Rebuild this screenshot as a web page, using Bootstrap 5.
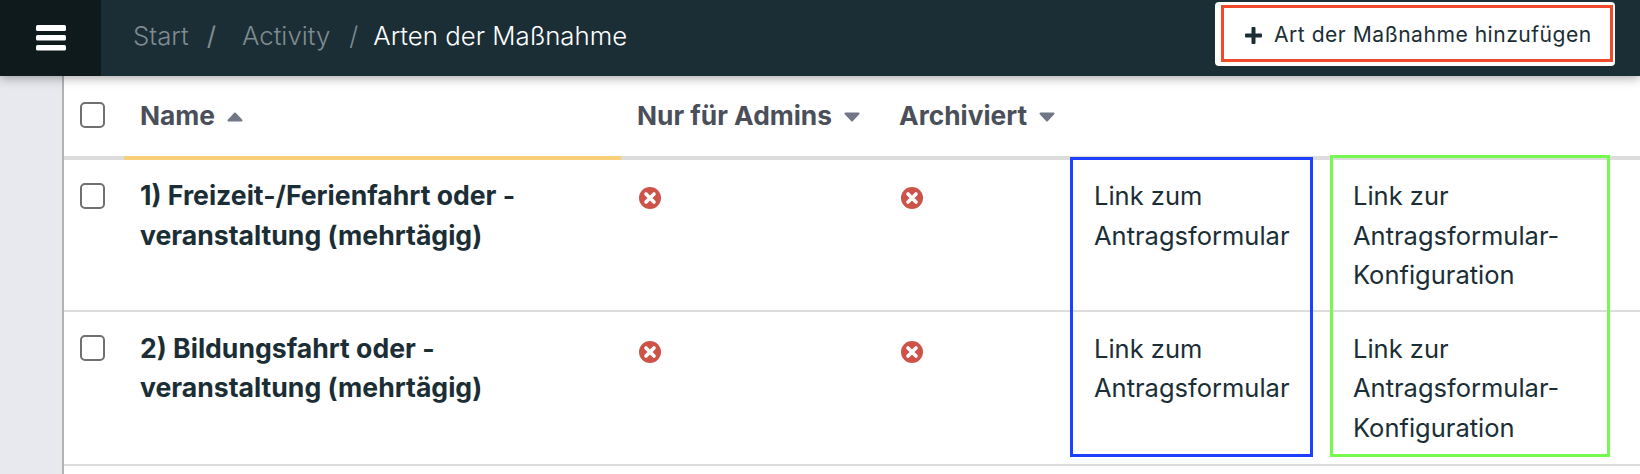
<!DOCTYPE html>
<html lang="de">
<head>
  <meta charset="UTF-8" />
  <meta name="viewport" content="width=device-width, initial-scale=1.0"/>
  <title>Arten der Maßnahme</title>
  <link href="https://cdn.jsdelivr.net/npm/bootstrap@5.3.3/dist/css/bootstrap.min.css" rel="stylesheet">
  <style>
    html, body { height: 100%; }
    body {
      overflow: hidden;
      background: #e7e9ee;
      font-family: "Inter", "Liberation Sans", sans-serif;
      color: #1b2e36;
    }

    .top-bar {
      height: 76px;
      padding: 0;
      background: #1b2e36;
      box-shadow: 0 2px 10px rgba(0, 0, 0, 0.35);
      position: relative;
      z-index: 2;
      align-items: flex-start;
    }
    .menu-toggle {
      --bs-btn-bg: #0e1a1c;
      --bs-btn-hover-bg: #0e1a1c;
      --bs-btn-active-bg: #0e1a1c;
      width: 101px;
      height: 76px;
      border: 0;
      border-radius: 0;
      padding: 0;
    }
    .top-bar .breadcrumb { font-size: 25.8px; margin-left: 32px; padding-bottom: 3px; }
    .top-bar .breadcrumb-item a { color: #7f8b90; text-decoration: none; font-weight: 300; }
    .top-bar .breadcrumb-item.active { color: #fff; font-weight: 300; }
    .top-bar .breadcrumb-item + .breadcrumb-item { padding-left: 18px; }
    .top-bar .breadcrumb-item + .breadcrumb-item::before { color: #7f8b90; padding-right: 18px; }
    .top-bar .breadcrumb-item:nth-child(2)::before { padding-right: 26px; }
    .top-bar .breadcrumb-item:nth-child(3)::before { padding-right: 15px; }
    .top-bar .breadcrumb-item:nth-child(3) { padding-left: 19px; }

    .add-wrap {
      background: #fff;
      border-radius: 4px;
      margin: 2px 25px 0 0;
      padding: 3px 2px 4px 6px;
    }
    .add-btn {
      --bs-btn-bg: #fff;
      --bs-btn-hover-bg: #fff;
      --bs-btn-color: #1b2e36;
      --bs-btn-hover-color: #1b2e36;
      --bs-btn-border-color: #ef4a2c;
      --bs-btn-hover-border-color: #ef4a2c;
      width: 392px;
      height: 57px;
      padding: 3px 0 0 21px;
      border-width: 3px;
      border-radius: 0;
      font-size: 21.1px;
      letter-spacing: 0.5px;
      gap: 12px;
    }

    .content-area {
      position: relative;
      margin-left: 62px;
      height: calc(100% - 76px);
      background: #fff;
      border-left: 2px solid #b3b3b3;
    }
    .type-table { table-layout: fixed; width: 100%; margin: 0; font-size: 25.5px; line-height: 39.6px; }
    .type-table > :not(caption) > * > * { color: #1b2e36; padding: 16px 17px 15px; vertical-align: top; border-bottom: 2px solid #dcdcdc; box-shadow: none; }
    .type-table > tbody > tr + tr > td { padding-top: 17px; padding-bottom: 16px; }
    .type-table thead th {
      height: 82px;
      padding-top: 20px;
      padding-bottom: 0;
      color: #4a4f59;
      border-bottom: 4px solid #dcdcdc;
      font-size: 26.3px;
    }
    .type-table thead th.sorted { border-bottom-color: #f9d077; }
    .type-table > * > tr > .text-col { padding-left: 16px; }
    .type-table .check-cell { padding-left: 16px; padding-right: 0; }
    .type-table .form-check-input {
      width: 25px;
      height: 26px;
      margin: 7px 0 0;
      border: 2px solid #707070;
      border-radius: 5px;
    }
    .type-table thead .form-check-input { margin-top: 6px; }
    .type-table tr + tr .form-check-input { margin-top: 6px; }
    .type-table .name-cell { font-weight: 700; font-size: 26.6px; }
    .type-table .wrap-cell { padding-right: 30px; }
    .sort-caret { margin-left: 12px; vertical-align: 3px; }
    .no-icon { display: block; margin: 11px 0 0 1px; }
    tr + tr .no-icon { margin-top: 12px; }

    .mark-box { position: absolute; border-style: solid; border-width: 3px; pointer-events: none; }
    .mark-blue { left: 1006px; top: 81px; width: 243px; height: 300px; border-color: #1f3fff; }
    .mark-green { left: 1266px; top: 79px; width: 280px; height: 302px; border-color: #76f94f; }
  </style>
</head>
<body>

  <nav class="navbar top-bar flex-nowrap justify-content-between">
    <div class="d-flex align-items-center">
      <button class="btn menu-toggle d-flex align-items-center justify-content-center" type="button" aria-label="Menü">
        <svg width="30" height="26" viewBox="0 0 30 26" fill="#fff">
          <rect x="0" y="0" width="30" height="6" rx="1.5"/>
          <rect x="0" y="10" width="30" height="5.5" rx="1.5"/>
          <rect x="0" y="20" width="30" height="5.5" rx="1.5"/>
        </svg>
      </button>
      <ol class="breadcrumb mb-0">
        <li class="breadcrumb-item"><a href="#">Start</a></li>
        <li class="breadcrumb-item"><a href="#">Activity</a></li>
        <li class="breadcrumb-item active" aria-current="page">Arten der Maßnahme</li>
      </ol>
    </div>
    <div class="add-wrap">
      <button class="btn add-btn d-flex align-items-center" type="button">
        <svg width="17" height="17" viewBox="0 0 17 17" fill="#1b2e36">
          <rect x="6.5" y="0" width="4" height="17" rx="1"/>
          <rect x="0" y="6.5" width="17" height="4" rx="1"/>
        </svg>
        <span>Art der Maßnahme hinzufügen</span>
      </button>
    </div>
  </nav>

  <div class="content-area">
    <table class="table type-table">
      <colgroup>
        <col style="width: 60px">
        <col style="width: 497px">
        <col style="width: 262px">
        <col style="width: 194px">
        <col style="width: 259px">
        <col>
      </colgroup>
      <thead>
        <tr>
          <th class="check-cell"><input class="form-check-input" type="checkbox" aria-label="Alle"></th>
          <th class="sorted text-col">Name<svg class="sort-caret" width="16" height="10" viewBox="0 0 16 10"><polygon points="8,1.5 14.5,8.5 1.5,8.5" fill="#717787" stroke="#717787" stroke-width="2" stroke-linejoin="round"/></svg></th>
          <th class="text-col">Nur für Admins<svg class="sort-caret" width="16" height="10" viewBox="0 0 16 10"><polygon points="1.5,1.5 14.5,1.5 8,8.5" fill="#717787" stroke="#717787" stroke-width="2" stroke-linejoin="round"/></svg></th>
          <th class="text-col">Archiviert<svg class="sort-caret" width="16" height="10" viewBox="0 0 16 10"><polygon points="1.5,1.5 14.5,1.5 8,8.5" fill="#717787" stroke="#717787" stroke-width="2" stroke-linejoin="round"/></svg></th>
          <th></th>
          <th></th>
        </tr>
      </thead>
      <tbody>
        <tr>
          <td class="check-cell"><input class="form-check-input" type="checkbox" aria-label="Zeile 1"></td>
          <td class="name-cell text-col">1) Freizeit-/Ferienfahrt oder -veranstaltung (mehrtägig)</td>
          <td><svg class="no-icon" width="22" height="22" viewBox="0 0 22 22"><circle cx="11" cy="11" r="11" fill="#cd5248"/><path d="M7 7l8 8M15 7l-8 8" stroke="#fff" stroke-width="3.6" stroke-linecap="round"/></svg></td>
          <td><svg class="no-icon" width="22" height="22" viewBox="0 0 22 22"><circle cx="11" cy="11" r="11" fill="#cd5248"/><path d="M7 7l8 8M15 7l-8 8" stroke="#fff" stroke-width="3.6" stroke-linecap="round"/></svg></td>
          <td>Link zum Antragsformular</td>
          <td class="wrap-cell">Link zur Antragsformular-Konfiguration</td>
        </tr>
        <tr>
          <td class="check-cell"><input class="form-check-input" type="checkbox" aria-label="Zeile 2"></td>
          <td class="name-cell text-col">2) Bildungsfahrt oder -veranstaltung (mehrtägig)</td>
          <td><svg class="no-icon" width="22" height="22" viewBox="0 0 22 22"><circle cx="11" cy="11" r="11" fill="#cd5248"/><path d="M7 7l8 8M15 7l-8 8" stroke="#fff" stroke-width="3.6" stroke-linecap="round"/></svg></td>
          <td><svg class="no-icon" width="22" height="22" viewBox="0 0 22 22"><circle cx="11" cy="11" r="11" fill="#cd5248"/><path d="M7 7l8 8M15 7l-8 8" stroke="#fff" stroke-width="3.6" stroke-linecap="round"/></svg></td>
          <td>Link zum Antragsformular</td>
          <td class="wrap-cell">Link zur Antragsformular-Konfiguration</td>
        </tr>
      </tbody>
    </table>
    <div class="mark-box mark-blue"></div>
    <div class="mark-box mark-green"></div>
  </div>

</body>
</html>
